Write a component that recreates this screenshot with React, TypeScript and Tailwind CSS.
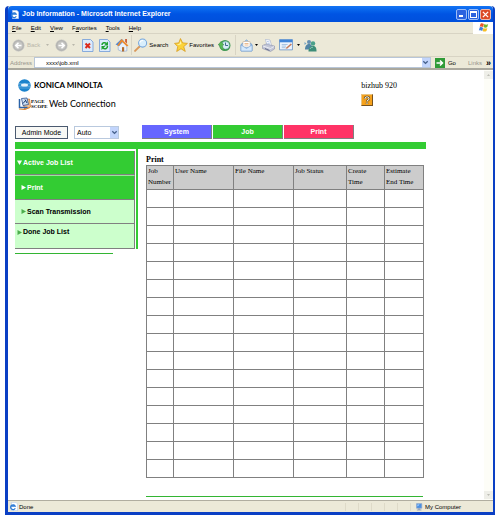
import type { ReactNode } from "react";

const MENUS = [
  { key: "F", rest: "ile", before: "" },
  { key: "E", rest: "dit", before: "" },
  { key: "V", rest: "iew", before: "" },
  { key: "a", rest: "vorites", before: "F" },
  { key: "T", rest: "ools", before: "" },
  { key: "H", rest: "elp", before: "" },
];

const COLUMNS = [
  { label: "Job\nNumber", width: "w-[27px]" },
  { label: "User Name", width: "w-[60px]" },
  { label: "File Name", width: "w-[60px]" },
  { label: "Job Status", width: "w-[53px]" },
  { label: "Create\nTime", width: "w-[38px]" },
  { label: "Estimate\nEnd Time", width: "w-[39px]" },
];

const ROWS = Array.from({ length: 16 }, (_, i) => i);

function Svg({ size = 13, children }: { size?: number; children: ReactNode }) {
  return (
    <svg viewBox="0 0 26 26" width={size} height={size} className="shrink-0" aria-hidden="true">
      {children}
    </svg>
  );
}

function NavArrow({ flip }: { flip?: boolean }) {
  return (
    <Svg>
      <circle cx="13" cy="13" r="11.5" fill="#b4b4b2" stroke="#c9c9c5" />
      <circle cx="13" cy="13" r="8" fill="#c6c6c3" />
      <path
        d={flip ? "M7 13H18M13 7.5L18.5 13L13 18.5" : "M19 13H8M13 7.5L7.5 13L13 18.5"}
        fill="none" stroke="#fff" strokeWidth="3.2"
      />
    </Svg>
  );
}

function PageFrame() {
  return <path d="M3 1H19L24 6V25H3Z" fill="#dcebfc" stroke="#6f9bd8" strokeWidth="1.6" />;
}

function StopIcon() {
  return (
    <Svg>
      <PageFrame />
      <path d="M9 9L18 18M18 9L9 18" stroke="#dc2a1c" strokeWidth="4" />
    </Svg>
  );
}

function RefreshIcon() {
  return (
    <Svg>
      <PageFrame />
      <path d="M8 12C8 7 14 6 17 9" fill="none" stroke="#1fa031" strokeWidth="3" />
      <path d="M20 5V13H12Z" fill="#1fa031" />
      <path d="M19 14C19 20 13 21 10 18" fill="none" stroke="#1fa031" strokeWidth="3" />
      <path d="M7 22V14H15Z" fill="#1fa031" />
    </Svg>
  );
}

function HomeIcon() {
  return (
    <Svg size={14}>
      <path d="M6 13L15 8L22 14V24L13 25L6 22Z" fill="#e9f1fb" stroke="#7b9cc8" />
      <path d="M1 12L12 2L16 4L8 15Z" fill="#4f87d4" />
      <path d="M12 2L25 14L22 16L13 7L7 15L4 14Z" fill="#ee8a2c" />
      <path d="M19 2H22V10L19 7Z" fill="#c44a24" />
      <path d="M13 17H17V25H13Z" fill="#b36c2c" />
    </Svg>
  );
}

function SearchIcon() {
  return (
    <Svg size={14}>
      <path d="M10 16L2 24" stroke="#d9985a" strokeWidth="3.6" strokeLinecap="round" />
      <circle cx="16" cy="9.5" r="7.5" fill="#d9effd" stroke="#77a7dc" strokeWidth="2" />
      <path d="M11 9C11 6 14 4 17 5" fill="none" stroke="#fff" strokeWidth="2" />
    </Svg>
  );
}

function StarIcon() {
  return (
    <Svg size={14}>
      <path
        d="M12 1L16 9L25 10L18 16L21 25L13 20L5 25L7 16L1 10L9 9Z"
        fill="#fbd33b" stroke="#d79a1b" strokeWidth="1.4"
      />
      <path d="M12 5L14 11L9 13L5 11L10 11Z" fill="#fff3a8" />
    </Svg>
  );
}

function HistoryIcon() {
  return (
    <Svg>
      <circle cx="14" cy="13" r="11" fill="#3f9a55" />
      <circle cx="15" cy="12.5" r="7.5" fill="#d7eef6" stroke="#8bbccb" />
      <path d="M15 7V13H20" fill="none" stroke="#315a86" strokeWidth="1.8" />
      <path d="M0 12L6 5L12 12H9C9 16 10 19 13 22C7 22 3 18 3 12Z" fill="#59bb58" stroke="#2d7b3c" strokeWidth=".8" />
    </Svg>
  );
}

function MailIcon() {
  return (
    <Svg>
      <path d="M2 11L13 2L24 11V24H2Z" fill="#9ec7f2" stroke="#5d8fce" strokeWidth="1.4" />
      <path d="M6 5H20V16H6Z" fill="#fff" stroke="#c7a988" />
      <path d="M9 9H17M9 12H17" stroke="#e5a66b" strokeWidth="1.5" />
      <path d="M2 12L13 19L24 12V24H2Z" fill="#d5e9fc" stroke="#6b9bd6" />
    </Svg>
  );
}

function PrinterIcon() {
  return (
    <Svg>
      <path d="M7 1L16 2L19 13H10Z" fill="#fff" stroke="#8b9fc8" />
      <path d="M10 5L15 6M11 9L16 10" stroke="#86a4da" strokeWidth="1.3" />
      <path d="M1 13L8 10L25 14V20L17 25L1 19Z" fill="#c3c7d8" stroke="#8187a2" />
      <path d="M2 14L17 19L24 15" fill="none" stroke="#f6f7fb" strokeWidth="1.5" />
      <path d="M6 19L15 23" stroke="#5c6484" strokeWidth="1.8" />
    </Svg>
  );
}

function EditIcon() {
  return (
    <Svg size={14}>
      <path d="M1 3H25V22H1Z" fill="#eef5fd" stroke="#5c8cc6" strokeWidth="1.4" />
      <path d="M1 3H25V8H1Z" fill="#3f84d8" />
      <path d="M5 12H16M5 15H13M5 18H12" stroke="#8fb1d8" strokeWidth="1.4" />
      <path d="M12 19L22 10L24 12L15 20Z" fill="#c27b5c" />
    </Svg>
  );
}

function MessengerIcon() {
  return (
    <Svg>
      <circle cx="10" cy="6" r="4" fill="#668fb2" />
      <path d="M2 21C2 13 6 10 10 10S17 13 17 21Z" fill="#5285a6" />
      <circle cx="18" cy="9" r="4.5" fill="#4ba08a" />
      <path d="M9 25C9 17 13 14 18 14S25 17 25 25Z" fill="#3d8d78" />
      <path d="M12 20C13 17 16 16 18 17" fill="none" stroke="#a9dccb" strokeWidth="1.5" />
      <path d="M1 6L5 9L1 12Z" fill="#79a7c4" />
    </Svg>
  );
}

function PageIcon() {
  return (
    <Svg size={9}>
      <path d="M7 1H20L25 6V25H7Z" fill="#fff" stroke="#a7bfe6" strokeWidth="1.5" />
      <path d="M18 18A7 7 0 1 1 18 12H7" fill="none" stroke="#2b7ad6" strokeWidth="3.5" />
    </Svg>
  );
}

function Flag() {
  return (
    <Svg size={11}>
      <path d="M6 4C9 2 11 3 14 5L12 12C9 10 7 10 4 11Z" fill="#e9552b" />
      <path d="M15 5C18 7 21 7 24 5L22 12C19 14 16 14 13 12Z" fill="#74b52d" />
      <path d="M4 13C7 11 9 12 12 14L10 21C7 19 5 19 2 20Z" fill="#3e7fdc" />
      <path d="M13 14C16 16 19 16 22 14L20 21C17 23 14 23 11 21Z" fill="#f6bf27" />
    </Svg>
  );
}

function Caret({ className = "" }: { className?: string }) {
  return (
    <svg viewBox="0 0 6 4" width="3" height="2" className={className} aria-hidden="true">
      <path d="M0 0H6L3 4Z" fill="currentColor" />
    </svg>
  );
}

function Chevron() {
  return (
    <svg viewBox="0 0 16 16" width="7" height="7" aria-hidden="true">
      <path d="M3 5L8 10L13 5" fill="none" stroke="#46618c" strokeWidth="3" />
    </svg>
  );
}

function TitleBar() {
  return (
    <header className="flex h-4 items-center gap-[3px] rounded-t bg-linear-to-b from-[#1474f4] via-[#0054e3] to-[#0050dc] px-[2px]">
      <PageIcon />
      <h1 className="flex-1 text-[7px] font-bold whitespace-nowrap text-white">
        Job Information - Microsoft Internet Explorer
      </h1>
      <div className="flex gap-px">
        <button aria-label="Minimize" className="flex size-[11px] items-end rounded-[2px] border border-[#9dbcf6] bg-[#2c63df] p-[2px]">
          <span className="h-[2px] w-1 bg-white" />
        </button>
        <button aria-label="Maximize" className="size-[11px] rounded-[2px] border border-[#9dbcf6] bg-[#2c63df] p-[1px]">
          <span className="block h-[7px] border border-t-2 border-white" />
        </button>
        <button aria-label="Close" className="flex size-[11px] items-center justify-center rounded-[2px] border border-[#f0b8a8] bg-[#dc4a26]">
          <svg viewBox="0 0 8 8" width="7" height="7" aria-hidden="true">
            <path d="M1 1L7 7M7 1L1 7" stroke="#fff" strokeWidth="1.5" />
          </svg>
        </button>
      </div>
    </header>
  );
}

function MenuBar() {
  return (
    <nav className="flex h-3 items-center border-b border-[#d8d4c4] pl-1">
      <div className="flex flex-1 gap-[9px]">
        {MENUS.map((m) => (
          <button key={m.key}>
            {m.before}
            <span className="underline">{m.key}</span>
            {m.rest}
          </button>
        ))}
      </div>
      <div className="flex h-3 w-5 items-center justify-center bg-white">
        <Flag />
      </div>
    </nav>
  );
}

function Separator() {
  return <span className="h-5 w-px bg-[#d8d4c4]" />;
}

function Toolbar() {
  return (
    <div className="flex h-[23px] items-center gap-[6px] border-b border-[#d8d4c4] pl-1">
      <button className="flex items-center gap-[2px] text-[#b9b7ab]">
        <NavArrow />
        Back
        <Caret className="ml-1" />
      </button>
      <button aria-label="Forward" className="flex items-center gap-1 text-[#b9b7ab]">
        <NavArrow flip />
        <Caret />
      </button>
      <div className="flex items-center gap-1">
        <button aria-label="Stop"><StopIcon /></button>
        <button aria-label="Refresh"><RefreshIcon /></button>
        <button aria-label="Home"><HomeIcon /></button>
      </div>
      <div className="-ml-1 flex items-center gap-[2px]">
        <Separator />
        <button className="flex items-center gap-px"><SearchIcon />Search</button>
      </div>
      <div className="flex items-center gap-1">
        <button className="flex items-center gap-px"><StarIcon />Favorites</button>
        <button aria-label="History"><HistoryIcon /></button>
        <Separator />
        <button aria-label="Mail" className="flex items-center gap-[2px]"><MailIcon /><Caret /></button>
        <button aria-label="Print page"><PrinterIcon /></button>
        <button aria-label="Edit" className="flex items-center gap-1"><EditIcon /><Caret /></button>
        <button aria-label="Messenger"><MessengerIcon /></button>
      </div>
    </div>
  );
}

function AddressBar() {
  return (
    <div className="flex h-[13px] items-center border-b-2 border-[#aaa89e]">
      <label htmlFor="address" className="w-[26px] pl-[2px] text-[#96958c]">Address</label>
      <div className="flex h-[11px] flex-1 items-center border border-[#b8c6d8] bg-white">
        <input id="address" defaultValue="xxxx\job.xml" className="min-w-0 flex-1 pl-[11px] outline-none" />
        <button aria-label="Show addresses" className="flex h-[9px] w-2 items-center justify-center bg-[#c2d5fc]">
          <Chevron />
        </button>
      </div>
      <button className="ml-1 flex items-center gap-[3px]">
        <svg viewBox="0 0 20 20" width="10" height="10" aria-hidden="true">
          <path d="M0 0H20V20H0Z" fill="#2f9b38" />
          <path d="M3 10H15M10 5L15 10L10 15" fill="none" stroke="#fff" strokeWidth="3" />
        </svg>
        Go
      </button>
      <span className="ml-3 text-[#96958c]">Links</span>
      <button aria-label="More links" className="mr-[2px] ml-1 text-[9px] leading-[8px] font-bold">»</button>
    </div>
  );
}

function Brand() {
  return (
    <div className="flex items-start justify-between pr-[29px]">
      <div className="pl-[3px]">
        <div className="flex items-center gap-[3px]">
          <svg viewBox="0 0 26 26" width="13" height="13" aria-hidden="true">
            <circle cx="13" cy="13" r="12.5" fill="#1b83cc" />
            <path d="M2 9H24M1 12H25M1 15H25M2 18H24" stroke="#8cc4ea" strokeWidth="1" />
            <ellipse cx="13" cy="12" rx="7" ry="3" fill="#e4f2fc" />
          </svg>
          <span className="font-[Lato] text-[8px] leading-[13px] font-bold">KONICA MINOLTA</span>
        </div>
        <div className="mt-[5px] flex items-center">
          <svg viewBox="0 0 26 26" width="13" height="13" aria-hidden="true">
            <path d="M9 6L23 4L25 20L13 24Z" fill="#f1c493" stroke="#c9762c" strokeWidth="1.5" />
            <path d="M7 3L18 2L21 15L10 17Z" fill="#cfe1f3" stroke="#244c8c" strokeWidth="1.5" />
            <path d="M3 4V21H19" fill="none" stroke="#2b63a8" strokeWidth="3" />
            <path d="M16 6L10 13M14 5L18 12" stroke="#173a70" strokeWidth="2" />
            <path d="M2 24L14 25L24 21" fill="none" stroke="#dc8a32" strokeWidth="2" />
          </svg>
          <span className="w-[18px] font-['Liberation_Serif'] text-[5px] leading-[5px] font-bold">
            PAGE<br />SCOPE
          </span>
          <span className="font-[Lato] text-[9px] leading-[13px] whitespace-nowrap">Web Connection</span>
        </div>
      </div>
      <div className="font-['Liberation_Serif'] text-[8px] leading-[13px]">
        <p>bizhub 920</p>
        <button aria-label="Help" className="mt-[2px] flex size-3 items-center justify-center border border-[#e9c584] border-r-[#765220] border-b-[#765220] bg-[#f6a21c]">
          <svg viewBox="0 0 20 20" width="10" height="10" aria-hidden="true">
            <path d="M6 8C5 2 15 2 14 8C14 10 10 10 10 13M10 15V18" fill="none" stroke="#3d2a10" strokeWidth="4.5" />
            <path d="M6 8C5 2 15 2 14 8C14 10 10 10 10 13M10 15V18" fill="none" stroke="#fff3d0" strokeWidth="2.4" />
          </svg>
        </button>
      </div>
    </div>
  );
}

function Controls() {
  return (
    <div className="mt-[15px] flex h-[14px] items-center">
      <button className="h-[13px] w-[53px] border border-[#4b5a70] bg-[#f8f8f5] text-[7px] leading-[11px]">
        Admin Mode
      </button>
      <div className="relative ml-[6px] w-[45px]">
        <select aria-label="Display language" className="block h-[13px] w-full appearance-none border border-[#b9c9de] bg-white pl-[2px] text-[7px] leading-[11px]">
          <option>Auto</option>
        </select>
        <span className="pointer-events-none absolute top-px right-px flex h-[11px] w-2 items-center justify-center bg-[#c2d5fc]">
          <Chevron />
        </span>
      </div>
      <nav className="ml-[23px] flex gap-px text-center text-[7px] leading-[13px] font-bold text-white">
        <a href="#system" className="w-[70px] border-r border-b border-[#808080] bg-[#6666ff]">System</a>
        <a href="#job" className="w-[70px] border-r border-b border-[#808080] bg-[#33cc33]">Job</a>
        <a href="#print" className="w-[70px] border-r border-b border-[#808080] bg-[#ff3366]">Print</a>
      </nav>
    </div>
  );
}

function Triangle({ down, color }: { down?: boolean; color: string }) {
  return (
    <svg viewBox="0 0 10 10" width="5" height="5" className="shrink-0" aria-hidden="true">
      <path d={down ? "M0 1H10L5 10Z" : "M1 0L10 5L1 10Z"} fill={color} />
    </svg>
  );
}

function Sidebar() {
  return (
    <aside className="w-[123px] shrink-0">
      <div className="flex justify-between">
        <nav className="flex w-[120px] flex-col pt-[2px] text-[7px] font-bold">
          <a href="#active" className="flex h-6 items-center gap-px border-r border-b border-[#808080] bg-[#33cc33] pl-[2px] text-white">
            <Triangle down color="#fff" />Active Job List
          </a>
          <a href="#print-jobs" className="flex h-[25px] items-center gap-px border-t border-r border-b border-t-[#9be69b] border-r-[#808080] border-b-[#808080] bg-[#33cc33] pl-[6px] text-white">
            <Triangle color="#fff" />Print
          </a>
          <a href="#scan" className="flex h-6 items-center gap-px border-r border-b border-[#808080] bg-[#ccffcc] pl-[6px]">
            <Triangle color="#4cae4c" />Scan Transmission
          </a>
          <a href="#done" className="flex h-[25px] items-start gap-px border-r border-b border-[#808080] bg-[#ccffcc] pt-[3px] pl-[2px] leading-[10px]">
            <span className="flex h-[10px] items-center"><Triangle color="#4cae4c" /></span>Done Job List
          </a>
        </nav>
        <div className="w-[2px] bg-[#33cc33]" />
      </div>
      <div className="mt-1 h-px w-[98px] bg-[#33b533]" />
    </aside>
  );
}

function JobTable() {
  return (
    <section className="mr-[3px] ml-2 min-w-0 flex-1 pt-[5px] font-['Liberation_Serif']">
      <h2 className="text-[8px] leading-[11px] font-bold">Print</h2>
      <table className="w-full table-fixed border-collapse text-[7px] leading-[11px]">
        <thead>
          <tr className="h-6 bg-[#cccccc]">
            {COLUMNS.map((c) => (
              <th key={c.label} className={`${c.width} border border-[#808080] px-px text-left align-top font-normal whitespace-pre-line`}>
                {c.label}
              </th>
            ))}
          </tr>
        </thead>
        <tbody>
          {ROWS.map((r) => (
            <tr key={r} className="h-[18px]">
              {COLUMNS.map((c) => (
                <td key={c.label} className="border border-[#808080]" />
              ))}
            </tr>
          ))}
        </tbody>
      </table>
      <div className="mt-[18px] h-px bg-[#33b533]" />
    </section>
  );
}

function ScrollBar() {
  return (
    <div className="flex w-[9px] flex-col justify-between bg-[#fdfdf7] py-px">
      <button aria-label="Scroll up" className="flex h-2 items-center justify-center bg-[#eeeee8]">
        <Caret className="rotate-180 text-[#bdbdb5]" />
      </button>
      <button aria-label="Scroll down" className="flex h-2 items-center justify-center bg-[#eeeee8]">
        <Caret className="text-[#bdbdb5]" />
      </button>
    </div>
  );
}

function StatusBar() {
  return (
    <footer className="flex h-3 items-center border-t border-[#b0ada0] pl-px">
      <PageIcon />
      <span className="flex-1 pl-px">Done</span>
      <span className="flex gap-3">
        {[0, 1, 2, 3, 4, 5].map((i) => (
          <span key={i} className="h-2 w-px bg-[#dedac8]" />
        ))}
      </span>
      <span className="flex w-[82px] items-center gap-[2px] pl-1">
        <Svg size={8}>
          <path d="M5 2H22V17H5Z" fill="#4a90e4" stroke="#8da4c8" strokeWidth="2" />
          <path d="M10 17H17V21H21V24H6V21H10Z" fill="#9aa7bc" />
          <path d="M8 5H15L8 11Z" fill="#b3d9ff" />
        </Svg>
        My Computer
      </span>
    </footer>
  );
}

export default function App() {
  return (
    <div className="min-h-screen bg-white pt-[6px] pl-[5px] font-['Liberation_Sans',sans-serif] text-black">
      <div className="rounded-t border-r-2 border-b-[3px] border-l-[3px] border-[#0a3fc4] bg-[#ece9d8] text-[6px] leading-[8px]">
        <TitleBar />
        <MenuBar />
        <Toolbar />
        <AddressBar />
        <div className="flex bg-white">
          <main className="min-w-0 flex-1 pt-[9px] pb-[3px] pl-[7px]">
            <div className="w-full max-w-[411px]">
              <Brand />
              <Controls />
              <div className="mt-[3px] h-[7px] bg-[#33cc33]" />
              <div className="flex">
                <Sidebar />
                <JobTable />
              </div>
            </div>
          </main>
          <ScrollBar />
        </div>
        <StatusBar />
      </div>
    </div>
  );
}
